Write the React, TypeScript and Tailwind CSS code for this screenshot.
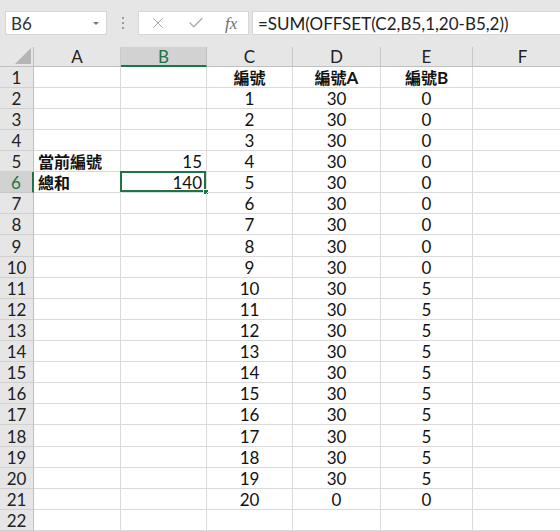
import { X, Check } from 'lucide-react';

const COLS = [
  { key: 'A', w: 87 },
  { key: 'B', w: 86 },
  { key: 'C', w: 86 },
  { key: 'D', w: 88 },
  { key: 'E', w: 92 },
  { key: 'F', w: 100 },
];

type Cell = { text: string; suffix?: string; align: 'left' | 'right' | 'center'; bold?: boolean; cjk?: boolean };

const buildRows = (): Record<string, Cell>[] => {
  const rows: Record<string, Cell>[] = [];
  for (let r = 1; r <= 22; r++) {
    const row: Record<string, Cell> = {};
    if (r === 1) {
      row.C = { text: '編號', align: 'center', bold: true, cjk: true };
      row.D = { text: '編號', suffix: 'A', align: 'center', bold: true, cjk: true };
      row.E = { text: '編號', suffix: 'B', align: 'center', bold: true, cjk: true };
    } else if (r <= 21) {
      const n = r - 1;
      row.C = { text: String(n), align: 'center' };
      row.D = { text: n === 20 ? '0' : '30', align: 'center' };
      row.E = { text: n >= 10 && n <= 19 ? '5' : '0', align: 'center' };
    }
    if (r === 5) {
      row.A = { text: '當前編號', align: 'left', bold: true, cjk: true };
      row.B = { text: '15', align: 'right' };
    }
    if (r === 6) {
      row.A = { text: '總和', align: 'left', bold: true, cjk: true };
      row.B = { text: '140', align: 'right' };
    }
    rows.push(row);
  }
  return rows;
};

const rowHeight = (r: number) => (r === 9 || r === 18 ? 'h-[22px]' : 'h-[21px]');

const App = () => {
  const rows = buildRows();

  return (
    <div
      className="w-[560px] h-[531px] overflow-hidden bg-white text-[#111] text-[17px]"
      style={{ fontFamily: '"Lato", "Noto Sans CJK TC", sans-serif' }}
    >
      {/* Formula bar */}
      <div className="h-[47px] bg-[#e6e6e6] flex items-start pt-[11px] whitespace-nowrap">
        <div className="ml-[5px] w-[102px] h-[24px] bg-white border border-[#d6d6d6] flex items-center justify-between pl-[5px] pr-[7px]">
          <span className="text-[17px] leading-none text-[#333]">B6</span>
          <span className="w-0 h-0 border-l-[3px] border-r-[3px] border-t-[3px] border-l-transparent border-r-transparent border-t-[#777]" />
        </div>
        <div className="w-[31px] h-[24px] flex flex-col items-center justify-center gap-[3px]">
          <span className="w-[2px] h-[2px] bg-[#9a9a9a]" />
          <span className="w-[2px] h-[2px] bg-[#9a9a9a]" />
          <span className="w-[2px] h-[2px] bg-[#9a9a9a]" />
        </div>
        <div className="w-[111px] h-[24px] bg-white border border-[#d6d6d6] flex items-center">
          <X size={18} strokeWidth={1.3} className="ml-[10px] text-[#a8a8a8]" />
          <Check size={18} strokeWidth={1.6} className="ml-[20px] text-[#a8a8a8]" />
          <span
            className="ml-[20px] text-[17px] italic text-[#6e6e6e] leading-none"
            style={{ fontFamily: '"Liberation Serif", serif' }}
          >
            fx
          </span>
        </div>
        <div className="ml-[3px] flex-1 h-[24px] bg-white border border-[#d6d6d6] border-r-0 flex items-center pl-[5px]">
          <span className="text-[17px] leading-none text-[#222]">=SUM(OFFSET(C2,B5,1,20-B5,2))</span>
        </div>
      </div>

      {/* Column headers */}
      <div className="flex h-[20px] bg-[#e6e6e6]">
        <div className="w-[34px] shrink-0 border-r border-[#bfbfbf] border-b border-b-[#bfbfbf] relative">
          <svg className="absolute right-[2px] bottom-[2px]" width="16" height="16" viewBox="0 0 16 16">
            <polygon points="16,0 16,16 0,16" fill="#b5b5b5" />
          </svg>
        </div>
        {COLS.map((c) =>
          c.key === 'B' ? (
            <div
              key={c.key}
              className="shrink-0 bg-[#d2d2d2] border-r border-[#bfbfbf] border-b-2 border-b-[#217346] flex items-center justify-center text-[#217346] leading-none"
              style={{ width: c.w }}
            >
              {c.key}
            </div>
          ) : (
            <div
              key={c.key}
              className="shrink-0 border-r border-[#c8c8c8] border-b border-b-[#bfbfbf] flex items-center justify-center text-[#222] leading-none"
              style={{ width: c.w }}
            >
              {c.key}
            </div>
          )
        )}
      </div>

      {/* Grid */}
      {rows.map((row, i) => {
        const r = i + 1;
        const selected = r === 6;
        return (
          <div key={r} className={`flex ${rowHeight(r)}`}>
            <div
              className={
                selected
                  ? 'w-[34px] shrink-0 bg-[#d2d2d2] border-r-2 border-[#217346] border-b border-b-[#c6c6c6] flex items-end justify-center text-[#217346] leading-[19px]'
                  : 'w-[34px] shrink-0 bg-[#e6e6e6] border-r border-[#bfbfbf] border-b border-b-[#d0d0d0] flex items-end justify-center text-[#222] leading-[19px]'
              }
            >
              {r}
            </div>
            {COLS.map((c) => {
              const cell = row[c.key];
              const isSel = selected && c.key === 'B';
              return (
                <div
                  key={c.key}
                  className="shrink-0 border-r border-b border-[#dadada] flex items-end px-[4px] leading-[19px] relative"
                  style={{ width: c.w }}
                >
                  {cell && (
                    <span
                      className={`w-full ${cell.bold ? 'font-bold' : ''} ${
                        cell.align === 'left' ? 'text-left' : cell.align === 'right' ? 'text-right' : 'text-center'
                      }`}
                    >
                      {cell.cjk ? <span className="text-[16px]">{cell.text}</span> : cell.text}
                      {cell.suffix}
                    </span>
                  )}
                  {isSel && (
                    <>
                      <div className="absolute -left-[1px] -top-[1px] right-0 bottom-0 border-2 border-[#217346]" />
                      <div className="absolute -right-[3px] -bottom-[3px] w-[6px] h-[6px] bg-[#217346] border border-white" />
                    </>
                  )}
                </div>
              );
            })}
          </div>
        );
      })}
    </div>
  );
};

export default App;
